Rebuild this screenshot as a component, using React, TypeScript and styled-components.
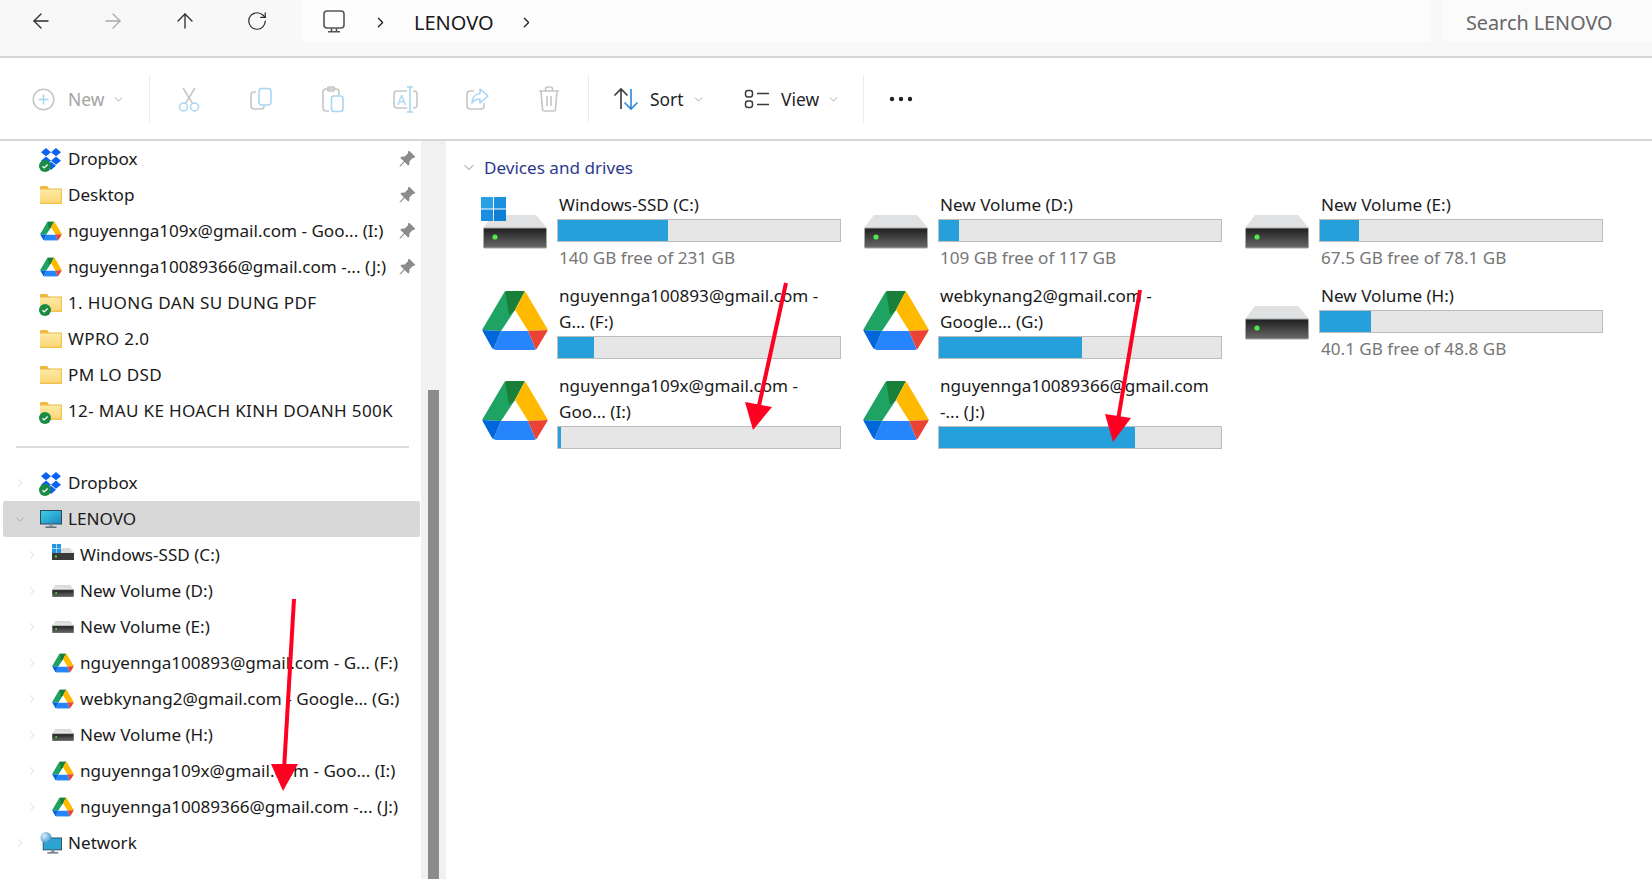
import React from "react";
import styled, { createGlobalStyle } from "styled-components";
import { ArrowLeft, ArrowRight, ArrowUp, RotateCw, ChevronRight, ChevronDown } from "lucide-react";
import { BsPinAngleFill } from "react-icons/bs";

const Global = createGlobalStyle`
  html, body { margin: 0; padding: 0; background: #fff; overflow: hidden; }
  body { font-family: "Noto Sans", "Open Sans", "Liberation Sans", sans-serif; color: #1a1a1a; }
  * { box-sizing: border-box; }
`;

const Page = styled.div`
  position: relative;
  width: 1652px;
  height: 879px;
  display: flex;
  flex-direction: column;
  overflow: hidden;
  background: #fff;
`;
const TopBar = styled.header`
  height: 58px;
  flex: none;
  display: flex;
  align-items: flex-start;
  background: #f8f8f8;
  border-bottom: 2px solid #d6d6d6;
`;
const NavGroup = styled.nav`
  display: flex;
  padding-left: 5px;
  margin-right: 9px;
`;
const NavButton = styled.div<{ $off?: boolean }>`
  width: 72px;
  height: 42px;
  display: flex;
  align-items: center;
  justify-content: center;
  color: ${(p) => (p.$off ? "#a8a8a8" : "#2a2a2a")};
`;
const Address = styled.div`
  width: 1128px;
  height: 42px;
  display: flex;
  align-items: center;
  padding-left: 21px;
  background: #fdfdfd;
  color: #222;
`;
const Crumb = styled.span`
  font-size: 20px;
  color: #1a1a1a;
  margin: 2px 24px 0 25px;
  width: 80px;
`;
const CrumbChevron = styled.span<{ $first?: boolean }>`
  display: flex;
  margin-left: ${(p) => (p.$first ? "27px" : "0")};
  margin-top: 2px;
  color: #222;
`;
const Search = styled.div`
  width: 209px;
  height: 42px;
  margin-left: 13px;
  padding: 2px 0 0 23px;
  display: flex;
  align-items: center;
  font-size: 19.8px;
  color: #666;
  background: #fbfbfb;
`;
const Toolbar = styled.div`
  height: 83px;
  flex: none;
  display: flex;
  align-items: center;
  padding: 1px 0 0 32px;
  background: #fff;
  border-bottom: 2px solid #d6d6d6;
`;
const NewButton = styled.div`
  width: 117px;
  display: flex;
  align-items: center;
  color: #a3a3a3;
  font-size: 17.4px;
`;
const NewLabel = styled.span`
  margin-left: 13px;
  margin-right: 8px;
`;
const ToolDivider = styled.div<{ $before?: number; $after?: number }>`
  width: 1px;
  height: 48px;
  background: #ececec;
  margin-left: ${(p) => p.$before ?? 0}px;
  margin-right: ${(p) => p.$after ?? 0}px;
`;
const IconButton = styled.div`
  width: 72px;
  display: flex;
  justify-content: center;
`;
const MenuButton = styled.div<{ $w: number }>`
  width: ${(p) => p.$w}px;
  display: flex;
  align-items: center;
  font-size: 17.4px;
  color: #1f1f1f;
`;
const MenuLabel = styled.span`
  margin-left: 11px;
  margin-right: 8px;
`;
const SmallChevron = styled.span`
  display: flex;
  color: #8a8a8a;
`;
const Body = styled.div`
  flex: 1;
  display: flex;
  min-height: 0;
`;
const Sidebar = styled.aside`
  width: 421px;
  flex: none;
  overflow: hidden;
`;
const Row = styled.div<{ $level?: number; $selected?: boolean }>`
  height: 36px;
  margin-left: 3px;
  width: 417px;
  display: flex;
  align-items: center;
  padding-left: ${(p) => (p.$level ? 22 : 10)}px;
  padding-right: 4px;
  border-radius: 2px;
  background: ${(p) => (p.$selected ? "#d8d8d8" : "transparent")};
  font-size: 17.1px;
  white-space: nowrap;
`;
const RowLabel = styled.span<{ $caps?: boolean }>`
  margin-top: -1px;
  letter-spacing: ${(p) => (p.$caps ? "0.33px" : "0")};
`;
const TreeChevron = styled.span<{ $dark?: boolean }>`
  width: 14px;
  flex: none;
  display: flex;
  justify-content: center;
  color: ${(p) => (p.$dark ? "#a6a6a6" : "#cfcfcf")};
`;
const IconSlot = styled.span`
  position: relative;
  width: 22px;
  height: 24px;
  flex: none;
  margin-left: 13px;
  margin-right: 6px;
  display: flex;
  align-items: center;
  justify-content: center;
`;
const Badge = styled.span`
  position: absolute;
  left: -1px;
  bottom: -1px;
  width: 12px;
  height: 12px;
  display: flex;
`;
const Pin = styled.span`
  margin-left: auto;
  display: flex;
  color: #8b8b8b;
`;
const NavDivider = styled.hr`
  margin: 17px 11px 17px 16px;
  width: 393px;
  height: 2px;
  border: 0;
  background: #dcdcdc;
`;
const ScrollTrack = styled.div`
  width: 25px;
  flex: none;
  padding: 249px 7px 0;
  display: flex;
  background: #f1f1f1;
`;
const ScrollThumb = styled.div`
  flex: 1;
  background: #8b8b8b;
`;
const Main = styled.main`
  flex: 1;
  padding: 14px 0 0 31px;
  min-width: 0;
`;
const SectionHead = styled.div`
  height: 24px;
  display: flex;
  align-items: center;
  font-size: 17.1px;
  color: #2d3a8c;
`;
const SectionChevron = styled.span`
  display: flex;
  width: 16px;
  margin: 0 7px 0 -16px;
  color: #777;
`;
const Tiles = styled.div`
  margin-top: 13px;
  display: grid;
  grid-template-columns: repeat(3, 381px);
  grid-template-rows: 91px 90px 90px;
`;
const Tile = styled.div`
  display: grid;
  grid-template-columns: 80px 284px;
  align-items: start;
`;
const TileIcon = styled.div`
  width: 72px;
  height: 72px;
  margin-top: 1px;
  display: flex;
`;
const TileName = styled.div`
  padding-left: 2px;
  font-size: 17.1px;
  line-height: 25.5px;
  color: #1a1a1a;
  overflow-wrap: anywhere;
`;
const Bar = styled.div`
  height: 23px;
  margin-top: 1.5px;
  border: 1px solid #bcbcbc;
  background: #e6e6e6;
  display: flex;
`;
const Fill = styled.div`
  background: #26a0da;
  height: 100%;
`;
const TileSub = styled.div`
  padding-left: 2px;
  margin-top: 3px;
  font-size: 17.1px;
  line-height: 25px;
  color: #767676;
`;
const Overlay = styled.svg`
  position: absolute;
  inset: 0;
  pointer-events: none;
`;

const GRAY = "#c6c6c6";
const BLUE = "#a9d6f2";

function MonitorOutline() {
  return (
    <svg width="22" height="23" viewBox="0 0 22 23" fill="none" stroke="#555" strokeWidth="1.6">
      <rect x="1" y="1" width="20" height="17" rx="3" />
      <path d="M8.5 18v3M13.5 18v3M5 21.8h12" />
    </svg>
  );
}
function PlusCircle() {
  return (
    <svg width="23" height="23" viewBox="0 0 23 23" fill="none" strokeWidth="1.6">
      <circle cx="11.5" cy="11.5" r="10.3" stroke={GRAY} />
      <path d="M11.5 6.5v10M6.5 11.5h10" stroke={BLUE} />
    </svg>
  );
}
function Scissors() {
  return (
    <svg width="24" height="25" viewBox="0 0 24 25" fill="none" strokeWidth="1.5">
      <path d="M6 1l9.5 15.5M18 1L8.5 16.5" stroke={GRAY} />
      <circle cx="6.5" cy="20" r="4" stroke={BLUE} />
      <circle cx="17.5" cy="20" r="4" stroke={BLUE} />
    </svg>
  );
}
function CopyIcon() {
  return (
    <svg width="24" height="24" viewBox="0 0 24 24" fill="none" strokeWidth="1.6">
      <path d="M7 5H5a3 3 0 0 0-3 3v11a3 3 0 0 0 3 3h7a3 3 0 0 0 3-3v-1" stroke={GRAY} />
      <rect x="10" y="1.5" width="12" height="16.5" rx="3" stroke={BLUE} />
    </svg>
  );
}
function PasteIcon() {
  return (
    <svg width="24" height="27" viewBox="0 0 24 27" fill="none" strokeWidth="1.6">
      <path d="M8 25H5a3 3 0 0 1-3-3V6a3 3 0 0 1 3-3h10a3 3 0 0 1 3 3v3" stroke={GRAY} />
      <rect x="6.5" y="1" width="7" height="4" rx="1.5" stroke={GRAY} />
      <rect x="10.5" y="10" width="11.5" height="15.5" rx="2.5" stroke={BLUE} />
    </svg>
  );
}
function RenameIcon() {
  return (
    <svg width="25" height="27" viewBox="0 0 25 27" fill="none" strokeWidth="1.6">
      <path d="M14 5H4a3 3 0 0 0-3 3v11a3 3 0 0 0 3 3h10M20 5h1a3 3 0 0 1 3 3v11a3 3 0 0 1-3 3h-1" stroke={GRAY} />
      <path d="M14 1h6M17 1v25M14 26h6" stroke={BLUE} />
      <text x="4" y="19" fontSize="14" fontFamily="Noto Sans" fill={BLUE} stroke="none">A</text>
    </svg>
  );
}
function ShareIcon() {
  return (
    <svg width="24" height="24" viewBox="0 0 24 24" fill="none" strokeWidth="1.6">
      <path d="M9 4H5a3 3 0 0 0-3 3v12a3 3 0 0 0 3 3h11a3 3 0 0 0 3-3v-3" stroke={GRAY} />
      <path d="M15 2l8 7-8 7v-4c-4 0-6 1-8 4 0-5 3-9 8-9.5V2z" stroke={BLUE} strokeLinejoin="round" />
    </svg>
  );
}
function TrashIcon() {
  return (
    <svg width="22" height="26" viewBox="0 0 22 26" fill="none" stroke={GRAY} strokeWidth="1.6">
      <path d="M1 5h20M7.5 5V3a2 2 0 0 1 2-2h3a2 2 0 0 1 2 2v2M3 5l1.5 18a2 2 0 0 0 2 2h9a2 2 0 0 0 2-2L19 5M9 10v10M13 10v10" />
    </svg>
  );
}
function SortIcon() {
  return (
    <svg width="26" height="24" viewBox="0 0 26 24" fill="none" strokeWidth="1.6">
      <path d="M8 22V2M1.5 8.5L8 2l6.5 6.5" stroke="#3a3a3a" />
      <path d="M18 2v20M11.5 15.5L18 22l6.5-6.5" stroke="#2b88d8" />
    </svg>
  );
}
function ViewIcon() {
  return (
    <svg width="26" height="20" viewBox="0 0 26 20" fill="none" stroke="#3a3a3a" strokeWidth="1.5">
      <rect x="1.5" y="1.5" width="7" height="6.5" rx="2.4" />
      <rect x="1.5" y="12" width="7" height="6.5" rx="2.4" />
      <path d="M13 4.5h12M13 15.5h12" />
    </svg>
  );
}
function Dots() {
  return (
    <svg width="24" height="6" viewBox="0 0 24 6" fill="#222">
      <circle cx="3" cy="3" r="2.2" />
      <circle cx="12" cy="3" r="2.2" />
      <circle cx="21" cy="3" r="2.2" />
    </svg>
  );
}

function DrivePaint() {
  return (
    <g>
      <polygon points="23,0 33,19 19,40 0,39" fill="#1ea362" />
      <polygon points="23,0 43,0 33,19 27,24" fill="#188038" />
      <polygon points="43,0 66,39 46,40 33,19" fill="#ffba00" />
      <polygon points="19,40 46,40 54,59 11,59" fill="#2684fc" />
      <polygon points="0,39 19,40 11,59" fill="#0066da" />
      <polygon points="46,40 66,39 54,59" fill="#ea4335" />
      <polygon points="33,20 46,40 20,40" fill="#fff" />
    </g>
  );
}
const driveOutline = "M20 2.5Q21.5 0 24.5 0H41.5Q44.5 0 46 2.5L65 36Q66.6 39 65 42L57 56Q55 59 52 59H14Q11 59 9 56L1 42Q-.6 39 1 36Z";
function GDrive({ w = 66, h = 59 }: { w?: number; h?: number }) {
  return (
    <svg width={w} height={h} viewBox="0 0 66 59">
      <clipPath id="gd"><path d={driveOutline} /></clipPath>
      <g clipPath="url(#gd)"><DrivePaint /></g>
    </svg>
  );
}
function HardDrive({ w = 64, h = 33 }: { w?: number; h?: number }) {
  return (
    <svg width={w} height={h} viewBox="0 0 64 33" preserveAspectRatio="none">
      <defs>
        <linearGradient id="hdb" x1="0" y1="0" x2="0" y2="1">
          <stop offset="0" stopColor="#1e1e1e" />
          <stop offset="1" stopColor="#6a6a6a" />
        </linearGradient>
        <linearGradient id="hdt" x1="0" y1="0" x2="0" y2="1">
          <stop offset="0" stopColor="#d4d6d9" />
          <stop offset="1" stopColor="#e9eaeb" />
        </linearGradient>
      </defs>
      <polygon points="10,0 53,0 64,13 0,13" fill="url(#hdt)" />
      <rect x="0.5" y="13" width="63" height="20" rx="1" fill="url(#hdb)" stroke="#a8a8a8" />
      <circle cx="12" cy="22" r="2.6" fill="#4fe84f" />
    </svg>
  );
}
function TileDrive({ windows }: { windows?: boolean }) {
  return (
    <svg width="72" height="72" viewBox="0 0 72 72">
      <defs>
        <linearGradient id="tb" x1="0" y1="0" x2="0" y2="1">
          <stop offset="0" stopColor="#1e1e1e" />
          <stop offset="1" stopColor="#6a6a6a" />
        </linearGradient>
      </defs>
      <polygon points="16,22 59,22 70,35 6,35" fill="#dfe1e3" />
      <rect x="6.5" y="35" width="63" height="20" rx="1" fill="url(#tb)" stroke="#a8a8a8" />
      <circle cx="18" cy="44" r="2.6" fill="#4fe84f" />
      {windows && (
        <g>
          <rect x="4" y="4" width="12" height="11.5" fill="#29a0e6" />
          <rect x="17" y="4" width="12" height="11.5" fill="#1b8fe0" />
          <rect x="4" y="16.5" width="12" height="11.5" fill="#1a8ee0" />
          <rect x="17" y="16.5" width="12" height="11.5" fill="#0f7fd6" />
        </g>
      )}
    </svg>
  );
}
function TileGDrive() {
  return (
    <svg width="72" height="72" viewBox="-5 -7 72 72">
      <clipPath id="gd2"><path d={driveOutline} /></clipPath>
      <g clipPath="url(#gd2)"><DrivePaint /></g>
    </svg>
  );
}
function Dropbox() {
  return (
    <svg width="22" height="22" viewBox="0 1 22 17" preserveAspectRatio="none" fill="#0a62f0">
      <polygon points="6,1 11,4.2 6,7.4 1,4.2" />
      <polygon points="16,1 21,4.2 16,7.4 11,4.2" />
      <polygon points="6,7.6 11,10.8 6,14 1,10.8" />
      <polygon points="16,7.6 21,10.8 16,14 11,10.8" />
      <polygon points="11,11.6 16,14.8 11,18 6,14.8" />
    </svg>
  );
}
function Folder() {
  return (
    <svg width="22" height="18" viewBox="0 0 22 18">
      <defs>
        <linearGradient id="fo" x1="0" y1="0" x2="0" y2="1">
          <stop offset="0" stopColor="#fdeaa6" />
          <stop offset="1" stopColor="#fad570" />
        </linearGradient>
      </defs>
      <path d="M0 1a1 1 0 0 1 1-1h6l2 2.5h13V5H0z" fill="#f0b83c" />
      <rect x="0" y="3.5" width="22" height="14.5" fill="url(#fo)" />
      <rect x="0" y="16.6" width="22" height="1.4" fill="#f2c14f" />
      <rect x="20.8" y="3.5" width="1.2" height="14.5" fill="#f2c14f" />
    </svg>
  );
}
function Check() {
  return (
    <svg width="12" height="12" viewBox="0 0 12 12">
      <circle cx="6" cy="6" r="6" fill="#1b8a43" />
      <path d="M3.4 6.2l1.8 1.7 3.4-3.4" fill="none" stroke="#fff" strokeWidth="1.3" />
    </svg>
  );
}
function Computer() {
  return (
    <svg width="22" height="18" viewBox="0 0 22 18">
      <defs>
        <linearGradient id="sc" x1="0" y1="0" x2="1" y2="1">
          <stop offset="0" stopColor="#3fd0e8" />
          <stop offset="1" stopColor="#1a87c0" />
        </linearGradient>
      </defs>
      <rect x="0.5" y="0.5" width="21" height="13.5" fill="url(#sc)" stroke="#2c4a5e" />
      <rect x="9" y="14" width="4" height="2.5" fill="#8a98a2" />
      <rect x="5.5" y="16.5" width="11" height="1.5" fill="#5f6d78" />
    </svg>
  );
}
function Network() {
  return (
    <svg width="24" height="24" viewBox="0 0 24 24">
      <defs>
        <radialGradient id="gl" cx="0.35" cy="0.35" r="0.8">
          <stop offset="0" stopColor="#d8f0fa" />
          <stop offset="1" stopColor="#2c86c4" />
        </radialGradient>
      </defs>
      <rect x="3.5" y="6.5" width="20" height="13" fill="#2aa4d4" stroke="#2c4a5e" />
      <rect x="12" y="19.5" width="4" height="2.5" fill="#8a98a2" />
      <rect x="8" y="22" width="12" height="1.5" fill="#5f6d78" />
      <circle cx="6.5" cy="6" r="6" fill="url(#gl)" />
    </svg>
  );
}

type NavItem = {
  label: string;
  icon: React.ReactNode;
  badge?: boolean;
  pin?: boolean;
  level?: number;
  chevron?: "right" | "down";
  selected?: boolean;
  caps?: boolean;
};

const SmallGDrive = <GDrive w={22} h={20} />;
const SmallDrive = <HardDrive w={22} h={12} />;
const SmallWinDrive = (
  <svg width="22" height="23" viewBox="0 0 22 23">
    <polygon points="7,4 18,4 22,9 0,9" fill="#dcdcdc" />
    <rect x="0" y="9" width="22" height="7" fill="#3a3a3a" />
    <circle cx="4" cy="12.5" r="1.1" fill="#4fe84f" />
    <rect x="0" y="0" width="4.2" height="4.2" fill="#1f97e4" />
    <rect x="4.8" y="0" width="4.2" height="4.2" fill="#1f97e4" />
    <rect x="0" y="4.8" width="4.2" height="4.2" fill="#1f97e4" />
    <rect x="4.8" y="4.8" width="4.2" height="4.2" fill="#1f97e4" />
  </svg>
);

const pinned: NavItem[] = [
  { label: "Dropbox", icon: <Dropbox />, badge: true, pin: true },
  { label: "Desktop", icon: <Folder />, pin: true },
  { label: "nguyennga109x@gmail.com - Goo... (I:)", icon: SmallGDrive, pin: true },
  { label: "nguyennga10089366@gmail.com -... (J:)", icon: SmallGDrive, pin: true },
  { label: "1. HUONG DAN SU DUNG PDF", icon: <Folder />, badge: true, caps: true },
  { label: "WPRO 2.0", icon: <Folder />, caps: true },
  { label: "PM LO DSD", icon: <Folder />, caps: true },
  { label: "12- MAU KE HOACH KINH DOANH 500K", icon: <Folder />, badge: true, caps: true },
];
const tree: NavItem[] = [
  { label: "Dropbox", icon: <Dropbox />, badge: true, chevron: "right" },
  { label: "LENOVO", icon: <Computer />, chevron: "down", selected: true },
  { label: "Windows-SSD (C:)", icon: SmallWinDrive, level: 1, chevron: "right" },
  { label: "New Volume (D:)", icon: SmallDrive, level: 1, chevron: "right" },
  { label: "New Volume (E:)", icon: SmallDrive, level: 1, chevron: "right" },
  { label: "nguyennga100893@gmail.com - G... (F:)", icon: SmallGDrive, level: 1, chevron: "right" },
  { label: "webkynang2@gmail.com - Google... (G:)", icon: SmallGDrive, level: 1, chevron: "right" },
  { label: "New Volume (H:)", icon: SmallDrive, level: 1, chevron: "right" },
  { label: "nguyennga109x@gmail.com - Goo... (I:)", icon: SmallGDrive, level: 1, chevron: "right" },
  { label: "nguyennga10089366@gmail.com -... (J:)", icon: SmallGDrive, level: 1, chevron: "right" },
  { label: "Network", icon: <Network />, chevron: "right" },
];

type Drive = { name: string; used: number; sub?: string; kind: "win" | "hdd" | "gd" };
const drives: Drive[] = [
  { name: "Windows-SSD (C:)", used: 110, sub: "140 GB free of 231 GB", kind: "win" },
  { name: "New Volume (D:)", used: 20, sub: "109 GB free of 117 GB", kind: "hdd" },
  { name: "New Volume (E:)", used: 39, sub: "67.5 GB free of 78.1 GB", kind: "hdd" },
  { name: "nguyennga100893@gmail.com - G... (F:)", used: 36, kind: "gd" },
  { name: "webkynang2@gmail.com - Google... (G:)", used: 143, kind: "gd" },
  { name: "New Volume (H:)", used: 51, sub: "40.1 GB free of 48.8 GB", kind: "hdd" },
  { name: "nguyennga109x@gmail.com - Goo... (I:)", used: 3, kind: "gd" },
  { name: "nguyennga10089366@gmail.com -... (J:)", used: 196, kind: "gd" },
];

function NavRow({ item }: { item: NavItem }) {
  return (
    <Row $level={item.level} $selected={item.selected}>
      <TreeChevron $dark={item.chevron === "down"}>
        {item.chevron === "right" && <ChevronRight size={18} strokeWidth={1.4} />}
        {item.chevron === "down" && <ChevronDown size={19} strokeWidth={1.4} />}
      </TreeChevron>
      <IconSlot>
        {item.icon}
        {item.badge && (
          <Badge>
            <Check />
          </Badge>
        )}
      </IconSlot>
      <RowLabel $caps={item.caps}>{item.label}</RowLabel>
      {item.pin && (
        <Pin>
          <BsPinAngleFill size={18} />
        </Pin>
      )}
    </Row>
  );
}

export default function App() {
  return (
    <Page>
      <Global />
      <TopBar>
        <NavGroup>
          <NavButton><ArrowLeft size={24} strokeWidth={1.3} /></NavButton>
          <NavButton $off><ArrowRight size={24} strokeWidth={1.3} /></NavButton>
          <NavButton><ArrowUp size={24} strokeWidth={1.3} /></NavButton>
          <NavButton><RotateCw size={22} strokeWidth={1.3} /></NavButton>
        </NavGroup>
        <Address>
          <MonitorOutline />
          <CrumbChevron $first><ChevronRight size={17} strokeWidth={1.8} /></CrumbChevron>
          <Crumb>LENOVO</Crumb>
          <CrumbChevron><ChevronRight size={17} strokeWidth={1.8} /></CrumbChevron>
        </Address>
        <Search>Search LENOVO</Search>
      </TopBar>

      <Toolbar>
        <NewButton>
          <PlusCircle />
          <NewLabel>New</NewLabel>
          <SmallChevron><ChevronDown size={13} strokeWidth={1.3} /></SmallChevron>
        </NewButton>
        <ToolDivider $after={3} />
        <IconButton><Scissors /></IconButton>
        <IconButton><CopyIcon /></IconButton>
        <IconButton><PasteIcon /></IconButton>
        <IconButton><RenameIcon /></IconButton>
        <IconButton><ShareIcon /></IconButton>
        <IconButton><TrashIcon /></IconButton>
        <ToolDivider $before={3} $after={24} />
        <MenuButton $w={131}>
          <SortIcon />
          <MenuLabel>Sort</MenuLabel>
          <SmallChevron><ChevronDown size={13} strokeWidth={1.3} /></SmallChevron>
        </MenuButton>
        <MenuButton $w={119}>
          <ViewIcon />
          <MenuLabel>View</MenuLabel>
          <SmallChevron><ChevronDown size={13} strokeWidth={1.3} /></SmallChevron>
        </MenuButton>
        <ToolDivider $after={1} />
        <IconButton><Dots /></IconButton>
      </Toolbar>

      <Body>
        <Sidebar>
          {pinned.map((item, i) => <NavRow key={i} item={item} />)}
          <NavDivider />
          {tree.map((item, i) => <NavRow key={i} item={item} />)}
        </Sidebar>
        <ScrollTrack><ScrollThumb /></ScrollTrack>
        <Main>
          <SectionHead>
            <SectionChevron><ChevronDown size={17} strokeWidth={1.3} /></SectionChevron>
            Devices and drives
          </SectionHead>
          <Tiles>
            {drives.map((d) => (
              <Tile key={d.name}>
                <TileIcon>
                  {d.kind === "gd" ? <TileGDrive /> : <TileDrive windows={d.kind === "win"} />}
                </TileIcon>
                <div>
                  <TileName>{d.name}</TileName>
                  <Bar><Fill style={{ width: d.used }} /></Bar>
                  {d.sub && <TileSub>{d.sub}</TileSub>}
                </div>
              </Tile>
            ))}
          </Tiles>
        </Main>
      </Body>

      <Overlay width="1652" height="879" viewBox="0 0 1652 879">
        <g fill="#fe0022" stroke="#fe0022">
          <path d="M294 599L284 770" strokeWidth="4" fill="none" />
          <polygon points="271,764 298,764 283,791" strokeWidth="0" />
          <path d="M786 283L758 410" strokeWidth="4" fill="none" />
          <polygon points="745,402 772,407 753,430" strokeWidth="0" />
          <path d="M1140 290L1118 420" strokeWidth="4" fill="none" />
          <polygon points="1105,414 1131,418 1113,442" strokeWidth="0" />
        </g>
      </Overlay>
    </Page>
  );
}
